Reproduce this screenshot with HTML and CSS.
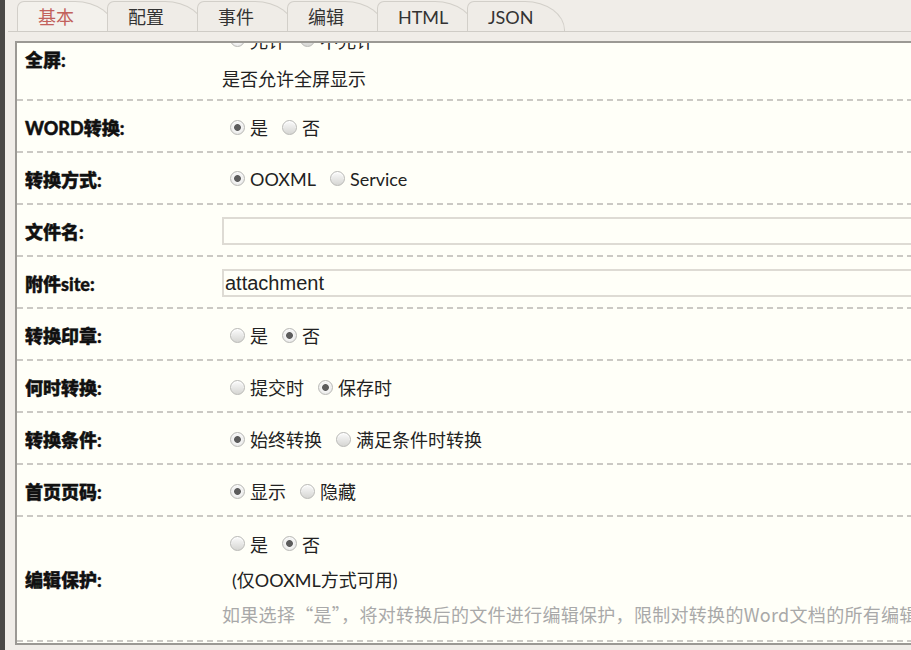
FILE: index.html
```html
<!DOCTYPE html>
<html lang="zh-CN">
<head>
    <meta charset="UTF-8">
    <meta name="viewport" content="width=device-width, initial-scale=1.0">
    <title>属性</title>
    <link rel="stylesheet" href="styles.css">
</head>
<body>

    <div class="page">
        <!-- 标签页 -->
        <div class="tabs">
            <div class="tab active">基本</div>
            <div class="tab">配置</div>
            <div class="tab">事件</div>
            <div class="tab">编辑</div>
            <div class="tab">HTML</div>
            <div class="tab">JSON</div>
        </div>

        <!-- 表单区域 -->
        <div class="panel">
            <div class="form">

                <div class="row fullscreen">
                    <div class="label">全屏:</div>
                    <div class="value">
                        <div class="line">
                            <label class="opt"><input type="radio" name="fs" checked>允许</label><label class="opt"><input type="radio" name="fs">不允许</label>
                        </div>
                        <div class="line desc">是否允许全屏显示</div>
                    </div>
                </div>

                <div class="row">
                    <div class="label">WORD转换:</div>
                    <div class="value">
                        <label class="opt"><input type="radio" name="word" checked>是</label><label class="opt"><input type="radio" name="word">否</label>
                    </div>
                </div>

                <div class="row">
                    <div class="label">转换方式:</div>
                    <div class="value">
                        <label class="opt"><input type="radio" name="mode" checked>OOXML</label><label class="opt"><input type="radio" name="mode">Service</label>
                    </div>
                </div>

                <div class="row">
                    <div class="label">文件名:</div>
                    <div class="value">
                        <input class="field" type="text" value="">
                    </div>
                </div>

                <div class="row">
                    <div class="label">附件site:</div>
                    <div class="value">
                        <input class="field" type="text" value="attachment">
                    </div>
                </div>

                <div class="row">
                    <div class="label">转换印章:</div>
                    <div class="value">
                        <label class="opt"><input type="radio" name="seal">是</label><label class="opt"><input type="radio" name="seal" checked>否</label>
                    </div>
                </div>

                <div class="row">
                    <div class="label">何时转换:</div>
                    <div class="value">
                        <label class="opt"><input type="radio" name="when">提交时</label><label class="opt"><input type="radio" name="when" checked>保存时</label>
                    </div>
                </div>

                <div class="row">
                    <div class="label">转换条件:</div>
                    <div class="value">
                        <label class="opt"><input type="radio" name="cond" checked>始终转换</label><label class="opt"><input type="radio" name="cond">满足条件时转换</label>
                    </div>
                </div>

                <div class="row">
                    <div class="label">首页页码:</div>
                    <div class="value">
                        <label class="opt"><input type="radio" name="page" checked>显示</label><label class="opt"><input type="radio" name="page">隐藏</label>
                    </div>
                </div>

                <div class="row protect">
                    <div class="label">编辑保护:</div>
                    <div class="value">
                        <div class="line">
                            <label class="opt"><input type="radio" name="protect">是</label><label class="opt"><input type="radio" name="protect" checked>否</label>
                        </div>
                        <div class="line note">(仅OOXML方式可用)</div>
                        <div class="line hint">如果选择“是”，将对转换后的文件进行编辑保护，限制对转换的Word文档的所有编辑操作。</div>
                    </div>
                </div>

            </div>
        </div>
    </div>

</body>
</html>
```

FILE: styles.css
```css
html, body {
    height: 100%;
}

body {
    margin: 0;
    background: #f0ede8;
    border-left: 5px solid #4a4946;
    font-family: Lato, "Noto Sans CJK SC", sans-serif;
    color: #222;
    overflow: hidden;
}

.page {
    width: 1300px;
}

/* 标签页 */
.tabs {
    display: flex;
    align-items: flex-end;
    height: 31px;
    margin-left: 3px;
    padding-left: 9px;
    border-bottom: 1px solid #cfccc6;
}

.tab {
    box-sizing: border-box;
    width: 98px;
    height: 30px;
    margin-right: -8px;
    padding-left: 20px;
    border: 1px solid #d2cfc9;
    border-bottom: none;
    border-radius: 7px 40px 0 0 / 7px 29px 0 0;
    background: #efece7;
    font-size: 18px;
    line-height: 30px;
    color: #333;
}

.tab.active {
    background: #f3f1ec;
    color: #c2615c;
}

/* 表单区域 */
.panel {
    margin: 9px 0 0 10px;
    height: 600px;
    border-top: 2px solid #9b9994;
    border-left: 2px solid #9b9994;
    border-bottom: 2px solid #9b9994;
    background: #fffff8;
    overflow: hidden;
}

/* 内容已向下滚动了一点 */
.form {
    margin-top: -30px;
}

.row {
    box-sizing: border-box;
    display: flex;
    align-items: center;
    min-height: 52px;
    background: repeating-linear-gradient(90deg, #cbc9c4 0 6px, transparent 6px 10px) left bottom / 100% 2px no-repeat;
}

.row.fullscreen {
    padding: 9px 0 6px;
}

.row.protect {
    padding: 9px 0 11px;
}

.label {
    flex: 0 0 205px;
    box-sizing: border-box;
    padding-left: 8px;
    font-size: 18px;
    font-weight: 900;
    color: #111;
    -webkit-text-stroke: 0.4px #111;
}

.value {
    flex: 1;
    font-size: 18px;
}

.line {
    height: 35px;
    display: flex;
    align-items: center;
    white-space: nowrap;
}

.desc {
    margin-top: 3px;
}

.note {
    padding-left: 10px;
}

.hint {
    font-family: "Noto Sans CJK SC", sans-serif;
    letter-spacing: 0.3px;
    color: #a9a9a9;
}

/* 单选按钮 */
.opt {
    display: inline-flex;
    align-items: center;
    gap: 5px;
    margin-right: 14px;
}

.opt:first-child {
    margin-left: 8px;
}

.opt input {
    appearance: none;
    -webkit-appearance: none;
    margin: 0;
    width: 15px;
    height: 15px;
    border-radius: 50%;
    border: 1px solid #b9b9b6;
    background: linear-gradient(#fbfbfb, #d6d6d3);
    box-shadow: inset 0 1px 1px #fff;
}

.opt input:checked {
    background: radial-gradient(circle, #5c5c5c 0 3px, #f6f6f6 3.8px, #dcdcda 100%);
}

/* 文本框 */
.field {
    box-sizing: border-box;
    display: block;
    width: 100%;
    height: 28px;
    margin: 0;
    padding: 0 1px;
    border: 2px solid #dedbd4;
    background: #fffff8;
    font-family: "Liberation Sans", Arial, sans-serif;
    font-size: 20px;
    color: #222;
    outline: none;
}
```
